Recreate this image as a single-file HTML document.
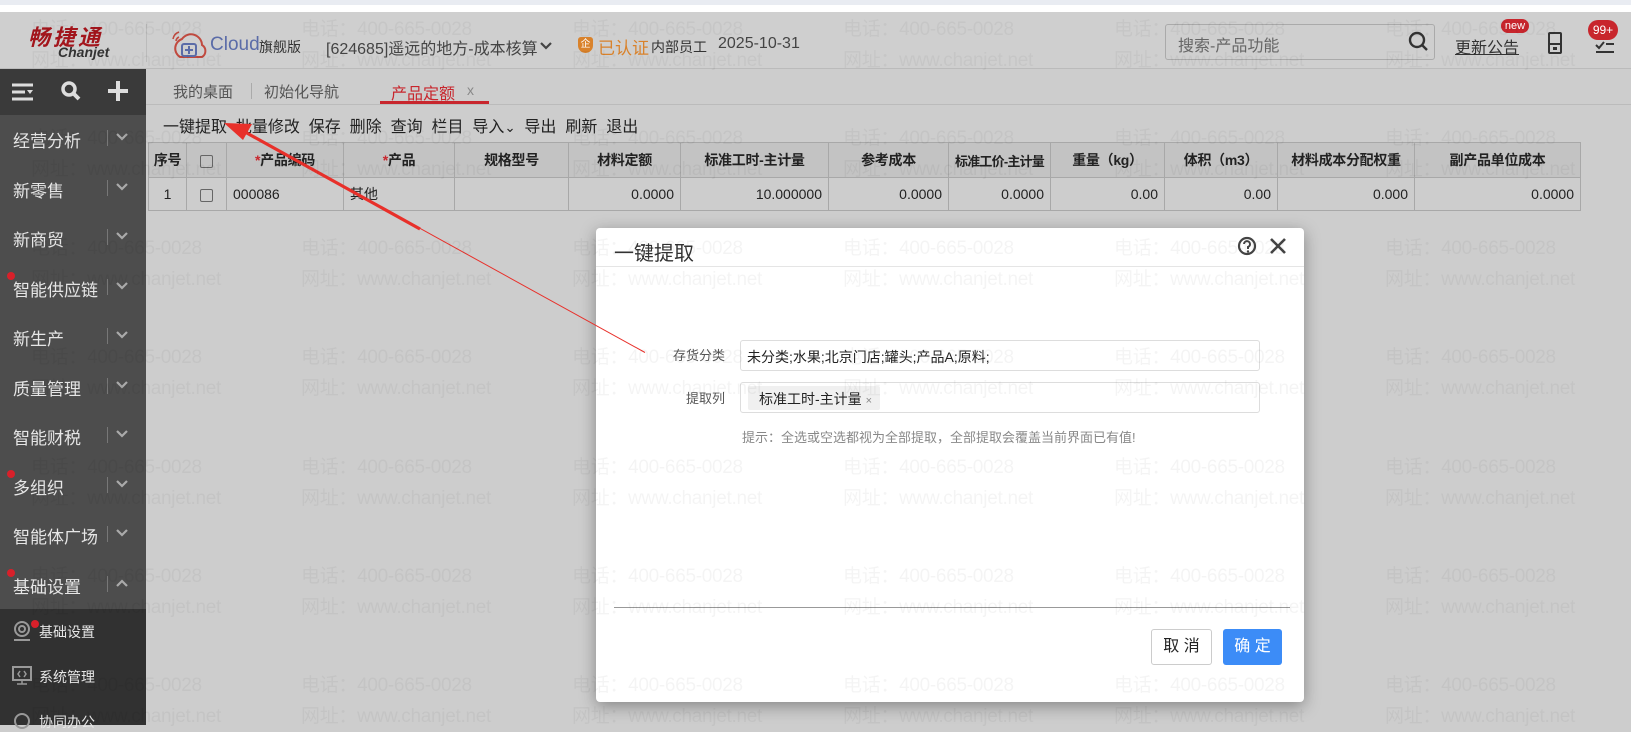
<!DOCTYPE html>
<html><head><meta charset="utf-8">
<style>
*{margin:0;padding:0;box-sizing:border-box}
body{width:1631px;height:725px;overflow:hidden;background:#cdcdcd;font-family:"Liberation Sans","Noto Sans CJK SC",sans-serif;position:relative;color:#222}
.a{position:absolute;white-space:nowrap}
.wm{position:absolute;font-size:19px;color:rgba(0,0,0,0.045);line-height:31px;white-space:nowrap;z-index:50;pointer-events:none;letter-spacing:-0.3px}
.side{position:absolute;left:0;top:69px;width:146px;height:656px;background:#4d4d4d}
.mi{position:absolute;left:13px;color:#e6e6e6;font-size:17px}
.mv{position:absolute;left:107px;width:1px;height:16px;background:#777}
.ch{position:absolute;left:116px}
.dot{position:absolute;width:8px;height:8px;border-radius:4px;background:#d8202a}
table{position:absolute;left:148px;top:142px;border-collapse:collapse;font-size:14px;table-layout:fixed;width:1432px}
td{border:1px solid #a8a8a8;height:33px;padding:0 6px;white-space:nowrap;overflow:hidden}
tr.h td{background:#c3c3c3;font-weight:bold;text-align:center;height:35px;padding:0 1px;letter-spacing:-0.3px}
.r{text-align:right}
.cb{display:inline-block;width:13px;height:13px;border:1px solid #666;border-radius:2px;vertical-align:middle}
</style></head><body>
<div class="a" style="left:0;top:0;width:1631px;height:5px;background:#e9ecf2"></div>
<div class="a" style="left:0;top:5px;width:1631px;height:7px;background:#fff"></div>
<div class="a" style="left:0;top:12px;width:1631px;height:57px;background:#cfcfcf;border-bottom:1px solid #bbb"></div>
<div class="a" style="left:28px;top:20px;font-size:22px;font-weight:bold;font-style:italic;color:#a3151c;letter-spacing:3px">畅捷通</div>
<div class="a" style="left:58px;top:44px;font-size:14px;font-weight:bold;font-style:italic;color:#333">Chanjet</div>
<div class="a" style="left:146px;top:24px;width:1px;height:38px;background:#bbb"></div>
<svg class="a" style="left:170px;top:27px" width="38" height="36" viewBox="0 0 38 36"><path d="M10 30 A10 10 0 0 1 12 12 A11 11 0 0 1 32 18 A7 7 0 0 1 32 30Z" fill="none" stroke="#c14a3f" stroke-width="2"/><rect x="12" y="17" width="14" height="12" rx="2" fill="none" stroke="#5b6ca8" stroke-width="2"/><path d="M19 19v8M15 23h8" stroke="#5b6ca8" stroke-width="2"/><path d="M3 12a9 9 0 0 1 6-7M6 14a5 5 0 0 1 3-4" stroke="#c14a3f" stroke-width="1.6" fill="none"/></svg>
<div class="a" style="left:210px;top:34px;font-size:19px;color:#5b6ca8">Cloud</div>
<div class="a" style="left:259px;top:37px;font-size:14px;color:#333">旗舰版</div>
<div class="a" style="left:326px;top:35px;font-size:16px;color:#444">[624685]遥远的地方-成本核算</div>
<svg class="a" style="left:540px;top:41px" width="12" height="10"><path d="M1 2l5 5 5-5" stroke="#444" stroke-width="2.2" fill="none"/></svg>
<div class="a" style="left:578px;top:37px;width:15px;height:16px;background:#d9822b;border-radius:3px 3px 8px 8px;color:#fff;font-size:10px;text-align:center;line-height:16px">企</div>
<div class="a" style="left:598px;top:34px;font-size:17px;color:#d9822b">已认证</div>
<div class="a" style="left:651px;top:37px;font-size:14px;color:#333">内部员工</div>
<div class="a" style="left:718px;top:35px;font-size:16px;color:#444">2025-10-31</div>
<div class="a" style="left:1165px;top:24px;width:270px;height:36px;border:1px solid #aaa;border-radius:3px;background:#cfcfcf"></div>
<div class="a" style="left:1178px;top:32px;font-size:16px;color:#666">搜索-产品功能</div>
<svg class="a" style="left:1408px;top:31px" width="22" height="22"><circle cx="9" cy="9" r="7" fill="none" stroke="#333" stroke-width="2.4"/><path d="M14 14l5 5" stroke="#333" stroke-width="2.4"/></svg>
<div class="a" style="left:1455px;top:34px;font-size:16px;color:#333;text-decoration:underline">更新公告</div>
<div class="a" style="left:1501px;top:19px;width:28px;height:14px;border-radius:7px;background:#c8262d;color:#fff;font-size:11px;text-align:center;line-height:14px">new</div>
<svg class="a" style="left:1547px;top:31px" width="16" height="24"><rect x="2" y="2" width="12" height="20" rx="1" fill="none" stroke="#333" stroke-width="2"/><path d="M2 13h12" stroke="#333" stroke-width="2"/><rect x="6" y="16" width="4" height="3" fill="#333"/></svg>
<div class="a" style="left:1588px;top:20px;width:30px;height:20px;border-radius:10px;background:#c8262d;color:#fff;font-size:12px;text-align:center;line-height:20px">99+</div>
<svg class="a" style="left:1595px;top:38px" width="20" height="16"><path d="M1 7l3 3 5-6M11 6h8M1 14h18" stroke="#333" stroke-width="2" fill="none"/></svg>

<div class="side"></div>
<div class="a" style="left:0;top:69px;width:146px;height:46px;background:#3a3a3a"></div>
<svg class="a" style="left:11px;top:82px" width="24" height="20"><path d="M1 3h21M1 10h13M1 17h21" stroke="#ddd" stroke-width="3"/><path d="M16 8h6l-3 4z" fill="#ddd"/></svg>
<svg class="a" style="left:60px;top:80px" width="22" height="22"><circle cx="9" cy="9" r="6" fill="none" stroke="#ddd" stroke-width="3.5"/><path d="M13 13l6 6" stroke="#ddd" stroke-width="4"/></svg>
<svg class="a" style="left:107px;top:80px" width="22" height="22"><path d="M11 1v20M1 11h20" stroke="#ddd" stroke-width="4"/></svg>

<div class="mi" style="top:127px">经营分析</div><div class="mv" style="top:130px"></div><svg class="ch" style="top:133px" width="12" height="9"><path d="M1 1l5 5 5-5" stroke="#aaa" stroke-width="2.2" fill="none"/></svg>
<div class="mi" style="top:177px">新零售</div><div class="mv" style="top:180px"></div><svg class="ch" style="top:183px" width="12" height="9"><path d="M1 1l5 5 5-5" stroke="#aaa" stroke-width="2.2" fill="none"/></svg>
<div class="mi" style="top:226px">新商贸</div><div class="mv" style="top:229px"></div><svg class="ch" style="top:232px" width="12" height="9"><path d="M1 1l5 5 5-5" stroke="#aaa" stroke-width="2.2" fill="none"/></svg>
<div class="mi" style="top:276px">智能供应链</div><div class="mv" style="top:279px"></div><svg class="ch" style="top:282px" width="12" height="9"><path d="M1 1l5 5 5-5" stroke="#aaa" stroke-width="2.2" fill="none"/></svg><div class="dot" style="left:7px;top:272px"></div>
<div class="mi" style="top:325px">新生产</div><div class="mv" style="top:328px"></div><svg class="ch" style="top:331px" width="12" height="9"><path d="M1 1l5 5 5-5" stroke="#aaa" stroke-width="2.2" fill="none"/></svg>
<div class="mi" style="top:375px">质量管理</div><div class="mv" style="top:378px"></div><svg class="ch" style="top:381px" width="12" height="9"><path d="M1 1l5 5 5-5" stroke="#aaa" stroke-width="2.2" fill="none"/></svg>
<div class="mi" style="top:424px">智能财税</div><div class="mv" style="top:427px"></div><svg class="ch" style="top:430px" width="12" height="9"><path d="M1 1l5 5 5-5" stroke="#aaa" stroke-width="2.2" fill="none"/></svg>
<div class="mi" style="top:474px">多组织</div><div class="mv" style="top:477px"></div><svg class="ch" style="top:480px" width="12" height="9"><path d="M1 1l5 5 5-5" stroke="#aaa" stroke-width="2.2" fill="none"/></svg><div class="dot" style="left:7px;top:470px"></div>
<div class="mi" style="top:523px">智能体广场</div><div class="mv" style="top:526px"></div><svg class="ch" style="top:529px" width="12" height="9"><path d="M1 1l5 5 5-5" stroke="#aaa" stroke-width="2.2" fill="none"/></svg>
<div class="mi" style="top:573px">基础设置</div><div class="mv" style="top:576px"></div><svg class="ch" style="top:579px" width="12" height="9"><path d="M1 7l5-5 5 5" stroke="#aaa" stroke-width="2.2" fill="none"/></svg><div class="dot" style="left:7px;top:569px"></div>
<div class="a" style="left:0;top:609px;width:146px;height:116px;background:#313131"></div>
<svg class="a" style="left:12px;top:620px" width="20" height="22"><circle cx="10" cy="9" r="7" fill="none" stroke="#999" stroke-width="2"/><circle cx="10" cy="9" r="3" fill="none" stroke="#999" stroke-width="2"/><path d="M2 20h16" stroke="#999" stroke-width="2"/></svg>
<div class="dot" style="left:31px;top:620px"></div>
<div class="a" style="left:39px;top:622px;color:#e6e6e6;font-size:14px">基础设置</div>
<svg class="a" style="left:12px;top:666px" width="20" height="20"><rect x="1" y="1" width="18" height="13" fill="none" stroke="#999" stroke-width="2"/><path d="M10 14v4M5 18h10M8 5l-2 3 2 3M12 5l2 3-2 3" stroke="#999" stroke-width="1.5" fill="none"/></svg>
<div class="a" style="left:39px;top:667px;color:#e6e6e6;font-size:14px">系统管理</div>
<svg class="a" style="left:12px;top:711px" width="20" height="20"><circle cx="10" cy="10" r="7" fill="none" stroke="#999" stroke-width="2"/></svg>
<div class="a" style="left:39px;top:712px;color:#e6e6e6;font-size:14px">协同办公</div>

<div class="a" style="left:146px;top:104px;width:1485px;height:1px;background:#bbb"></div>
<div class="a" style="left:173px;top:81px;font-size:15px;color:#555">我的桌面</div>
<div class="a" style="left:251px;top:83px;width:1px;height:16px;background:#aaa"></div>
<div class="a" style="left:264px;top:81px;font-size:15px;color:#555">初始化导航</div>
<div class="a" style="left:391px;top:80px;font-size:16px;color:#c8262d">产品定额</div>
<div class="a" style="left:467px;top:82px;font-size:14px;color:#888">x</div>
<div class="a" style="left:380px;top:101px;width:109px;height:3px;background:#c8262d"></div>
<div class="a" style="left:163px;top:113px;font-size:16px;color:#222">一键提取&nbsp; 批量修改&nbsp; 保存&nbsp; 删除&nbsp; 查询&nbsp; 栏目&nbsp; 导入<small>⌄</small>&nbsp; 导出&nbsp; 刷新&nbsp; 退出</div>

<table>
<colgroup><col style="width:38px"><col style="width:40px"><col style="width:117px"><col style="width:111px"><col style="width:114px"><col style="width:112px"><col style="width:148px"><col style="width:120px"><col style="width:102px"><col style="width:114px"><col style="width:113px"><col style="width:137px"><col style="width:166px"></colgroup>
<tr class="h"><td>序号</td><td><span class="cb"></span></td><td><span style="color:#c8262d">*</span>产品编码</td><td><span style="color:#c8262d">*</span>产品</td><td>规格型号</td><td>材料定额</td><td>标准工时-主计量</td><td>参考成本</td><td style="font-size:13px;letter-spacing:-0.8px">标准工价-主计量</td><td>重量（kg）</td><td>体积（m3）</td><td>材料成本分配权重</td><td>副产品单位成本</td></tr>
<tr><td style="text-align:center">1</td><td style="text-align:center"><span class="cb"></span></td><td>000086</td><td>其他</td><td></td><td class="r">0.0000</td><td class="r">10.000000</td><td class="r">0.0000</td><td class="r">0.0000</td><td class="r">0.00</td><td class="r">0.00</td><td class="r">0.000</td><td class="r">0.0000</td></tr>
</table>

<div class="a" style="left:596px;top:228px;width:708px;height:474px;background:#fff;border-radius:4px;box-shadow:0 4px 16px rgba(0,0,0,0.35)"></div>
<div class="a" style="left:614px;top:237px;font-size:20px;color:#333">一键提取</div>
<svg class="a" style="left:1237px;top:236px" width="20" height="20"><circle cx="10" cy="10" r="8" fill="none" stroke="#444" stroke-width="2.2"/><path d="M7 8a3 3 0 1 1 4 3v2" fill="none" stroke="#444" stroke-width="2"/><circle cx="11" cy="15.5" r="1.2" fill="#444"/></svg>
<svg class="a" style="left:1268px;top:236px" width="20" height="20"><path d="M3 3l14 14M17 3L3 17" stroke="#444" stroke-width="2.6"/></svg>
<div class="a" style="left:596px;top:266px;width:708px;height:1px;background:#e5e5e5"></div>
<div class="a" style="left:673px;top:345px;font-size:13px;color:#555">存货分类</div>
<div class="a" style="left:740px;top:340px;width:520px;height:31px;border:1px solid #ddd;border-radius:3px"></div>
<div class="a" style="left:747px;top:347px;font-size:14px;color:#222">未分类;水果;北京门店;罐头;产品A;原料;</div>
<div class="a" style="left:686px;top:388px;font-size:13px;color:#555">提取列</div>
<div class="a" style="left:740px;top:382px;width:520px;height:31px;border:1px solid #ddd;border-radius:3px"></div>
<div class="a" style="left:748px;top:386px;width:132px;height:24px;background:#f0f0f0;border-radius:2px"></div>
<div class="a" style="left:759px;top:389px;font-size:14px;color:#222">标准工时-主计量 <span style="font-size:11px;color:#888">×</span></div>
<div class="a" style="left:742px;top:427px;font-size:13px;color:#888">提示：全选或空选都视为全部提取，全部提取会覆盖当前界面已有值!</div>
<div class="a" style="left:614px;top:607px;width:676px;height:1px;background:#999"></div>
<div class="a" style="left:1151px;top:629px;width:61px;height:36px;border:1px solid #ccc;border-radius:3px;font-size:16px;text-align:center;line-height:34px;color:#222">取 消</div>
<div class="a" style="left:1223px;top:629px;width:59px;height:36px;background:#3c8cf7;border-radius:3px;font-size:16px;text-align:center;line-height:36px;color:#fff">确 定</div>

<svg class="a" style="left:0;top:0;z-index:40" width="1631" height="725"><polygon points="224,123 252,124 243,140" fill="#e8302a"/><path d="M240 129 L645 352.5" stroke="#e8302a" stroke-width="1"/><path d="M236 127 L420 229" stroke="#e8302a" stroke-width="3.2"/></svg>

<div class="wm" style="left:31px;top:14px">电话：400-665-0028<br>网址：www.chanjet.net</div>
<div class="wm" style="left:301px;top:14px">电话：400-665-0028<br>网址：www.chanjet.net</div>
<div class="wm" style="left:572px;top:14px">电话：400-665-0028<br>网址：www.chanjet.net</div>
<div class="wm" style="left:843px;top:14px">电话：400-665-0028<br>网址：www.chanjet.net</div>
<div class="wm" style="left:1114px;top:14px">电话：400-665-0028<br>网址：www.chanjet.net</div>
<div class="wm" style="left:1385px;top:14px">电话：400-665-0028<br>网址：www.chanjet.net</div>
<div class="wm" style="left:31px;top:123px">电话：400-665-0028<br>网址：www.chanjet.net</div>
<div class="wm" style="left:301px;top:123px">电话：400-665-0028<br>网址：www.chanjet.net</div>
<div class="wm" style="left:572px;top:123px">电话：400-665-0028<br>网址：www.chanjet.net</div>
<div class="wm" style="left:843px;top:123px">电话：400-665-0028<br>网址：www.chanjet.net</div>
<div class="wm" style="left:1114px;top:123px">电话：400-665-0028<br>网址：www.chanjet.net</div>
<div class="wm" style="left:1385px;top:123px">电话：400-665-0028<br>网址：www.chanjet.net</div>
<div class="wm" style="left:31px;top:233px">电话：400-665-0028<br>网址：www.chanjet.net</div>
<div class="wm" style="left:301px;top:233px">电话：400-665-0028<br>网址：www.chanjet.net</div>
<div class="wm" style="left:572px;top:233px">电话：400-665-0028<br>网址：www.chanjet.net</div>
<div class="wm" style="left:843px;top:233px">电话：400-665-0028<br>网址：www.chanjet.net</div>
<div class="wm" style="left:1114px;top:233px">电话：400-665-0028<br>网址：www.chanjet.net</div>
<div class="wm" style="left:1385px;top:233px">电话：400-665-0028<br>网址：www.chanjet.net</div>
<div class="wm" style="left:31px;top:342px">电话：400-665-0028<br>网址：www.chanjet.net</div>
<div class="wm" style="left:301px;top:342px">电话：400-665-0028<br>网址：www.chanjet.net</div>
<div class="wm" style="left:572px;top:342px">电话：400-665-0028<br>网址：www.chanjet.net</div>
<div class="wm" style="left:843px;top:342px">电话：400-665-0028<br>网址：www.chanjet.net</div>
<div class="wm" style="left:1114px;top:342px">电话：400-665-0028<br>网址：www.chanjet.net</div>
<div class="wm" style="left:1385px;top:342px">电话：400-665-0028<br>网址：www.chanjet.net</div>
<div class="wm" style="left:31px;top:452px">电话：400-665-0028<br>网址：www.chanjet.net</div>
<div class="wm" style="left:301px;top:452px">电话：400-665-0028<br>网址：www.chanjet.net</div>
<div class="wm" style="left:572px;top:452px">电话：400-665-0028<br>网址：www.chanjet.net</div>
<div class="wm" style="left:843px;top:452px">电话：400-665-0028<br>网址：www.chanjet.net</div>
<div class="wm" style="left:1114px;top:452px">电话：400-665-0028<br>网址：www.chanjet.net</div>
<div class="wm" style="left:1385px;top:452px">电话：400-665-0028<br>网址：www.chanjet.net</div>
<div class="wm" style="left:31px;top:561px">电话：400-665-0028<br>网址：www.chanjet.net</div>
<div class="wm" style="left:301px;top:561px">电话：400-665-0028<br>网址：www.chanjet.net</div>
<div class="wm" style="left:572px;top:561px">电话：400-665-0028<br>网址：www.chanjet.net</div>
<div class="wm" style="left:843px;top:561px">电话：400-665-0028<br>网址：www.chanjet.net</div>
<div class="wm" style="left:1114px;top:561px">电话：400-665-0028<br>网址：www.chanjet.net</div>
<div class="wm" style="left:1385px;top:561px">电话：400-665-0028<br>网址：www.chanjet.net</div>
<div class="wm" style="left:31px;top:670px">电话：400-665-0028<br>网址：www.chanjet.net</div>
<div class="wm" style="left:301px;top:670px">电话：400-665-0028<br>网址：www.chanjet.net</div>
<div class="wm" style="left:572px;top:670px">电话：400-665-0028<br>网址：www.chanjet.net</div>
<div class="wm" style="left:843px;top:670px">电话：400-665-0028<br>网址：www.chanjet.net</div>
<div class="wm" style="left:1114px;top:670px">电话：400-665-0028<br>网址：www.chanjet.net</div>
<div class="wm" style="left:1385px;top:670px">电话：400-665-0028<br>网址：www.chanjet.net</div>
</body></html>
